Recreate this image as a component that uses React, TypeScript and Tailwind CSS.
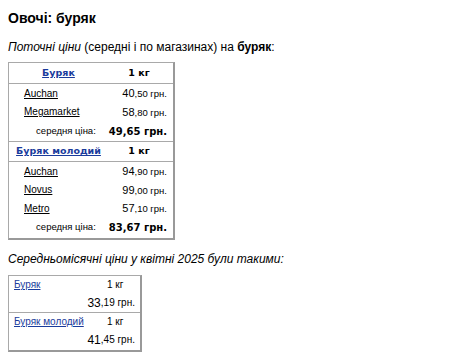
const arial = { fontFamily: '"Liberation Sans", Arial, sans-serif' };

type Shop = { name: string; whole: string; cents: string };
type Group = { title: string; shops: Shop[]; avg: string };

const groups: Group[] = [
  {
    title: "Буряк",
    shops: [
      { name: "Auchan", whole: "40", cents: ",50 грн." },
      { name: "Megamarket", whole: "58", cents: ",80 грн." },
    ],
    avg: "49,65 грн.",
  },
  {
    title: "Буряк молодий",
    shops: [
      { name: "Auchan", whole: "94", cents: ",90 грн." },
      { name: "Novus", whole: "99", cents: ",00 грн." },
      { name: "Metro", whole: "57", cents: ",10 грн." },
    ],
    avg: "83,67 грн.",
  },
];

const monthly = [
  { title: "Буряк", whole: "33", cents: ",19 грн." },
  { title: "Буряк молодий", whole: "41", cents: ",45 грн." },
];

function CurrentTable() {
  return (
    <div className="w-[167px] border border-[#a9a9a9] border-b-2 border-r-2 border-b-[#999] border-r-[#999]">
      {groups.map((g, gi) => (
        <div key={g.title} className={gi > 0 ? "border-t border-[#a9a9a9]" : ""}>
          <div className={`flex ${gi > 0 ? "h-[20px]" : "h-[21px]"} items-center border-b border-[#a9a9a9] font-['DejaVu_Sans',Verdana,sans-serif] text-[9.5px] font-bold`}>
            <a href="#" className="w-[96px] pl-[3px] text-center text-[#1a3b9c] underline">
              {g.title}
            </a>
            <span className="flex-1 text-center text-black">1 кг</span>
          </div>
          <div>
            {g.shops.map((s) => (
              <div key={s.name} className="flex h-[18.5px] items-center pl-[15px] pr-[6px] text-[10px] text-black" style={arial}>
                <a href="#" className="underline">{s.name}</a>
                <span className="ml-auto">
                  <span className="text-[11px]">{s.whole}</span>
                  <span className="text-[9.5px]">{s.cents}</span>
                </span>
              </div>
            ))}
            <div className="flex h-[20px] items-center justify-end pr-[6px] text-black">
              <span className="mr-[13px] text-[9.5px]" style={arial}>середня ціна:</span>
              <span className="font-['DejaVu_Sans',Verdana,sans-serif] text-[10px] font-bold">{g.avg}</span>
            </div>
          </div>
        </div>
      ))}
    </div>
  );
}

function MonthlyTable() {
  return (
    <div className="w-[134px] border border-[#a9a9a9] border-b-2 border-r-2 border-b-[#999] border-r-[#999]" style={arial}>
      {monthly.map((m, i) => (
        <div key={m.title} className={`px-[5px] ${i > 0 ? "border-t border-[#a9a9a9] pb-[1px]" : ""}`}>
          <div className="flex h-[18px] items-center text-[10px]">
            <a href="#" className="w-[93px] text-[#1a3b9c] underline">{m.title}</a>
            <span className="text-black">1 кг</span>
          </div>
          <div className="flex h-[18px] items-center justify-end text-black">
            <span className="text-[12px]">{m.whole}</span>
            <span className="text-[10px]">{m.cents}</span>
          </div>
        </div>
      ))}
    </div>
  );
}

export default function App() {
  return (
    <main className="min-h-[363px] w-[450px] bg-white px-2 pt-[10px] text-black" style={arial}>
      <h1 className="text-[14px] font-bold leading-[17px]">Овочі: буряк</h1>
      <p className="mt-[13px] text-[12px] leading-[14px]">
        <i>Поточні ціни</i> (середні і по магазинах) на <b>буряк</b>:
      </p>
      <div className="mt-[8px]">
        <CurrentTable />
      </div>
      <p className="mt-[12px] text-[12px] italic leading-[14px]">
        Середньомісячні ціни у квітні 2025 були такими:
      </p>
      <div className="mt-[9px]">
        <MonthlyTable />
      </div>
    </main>
  );
}
